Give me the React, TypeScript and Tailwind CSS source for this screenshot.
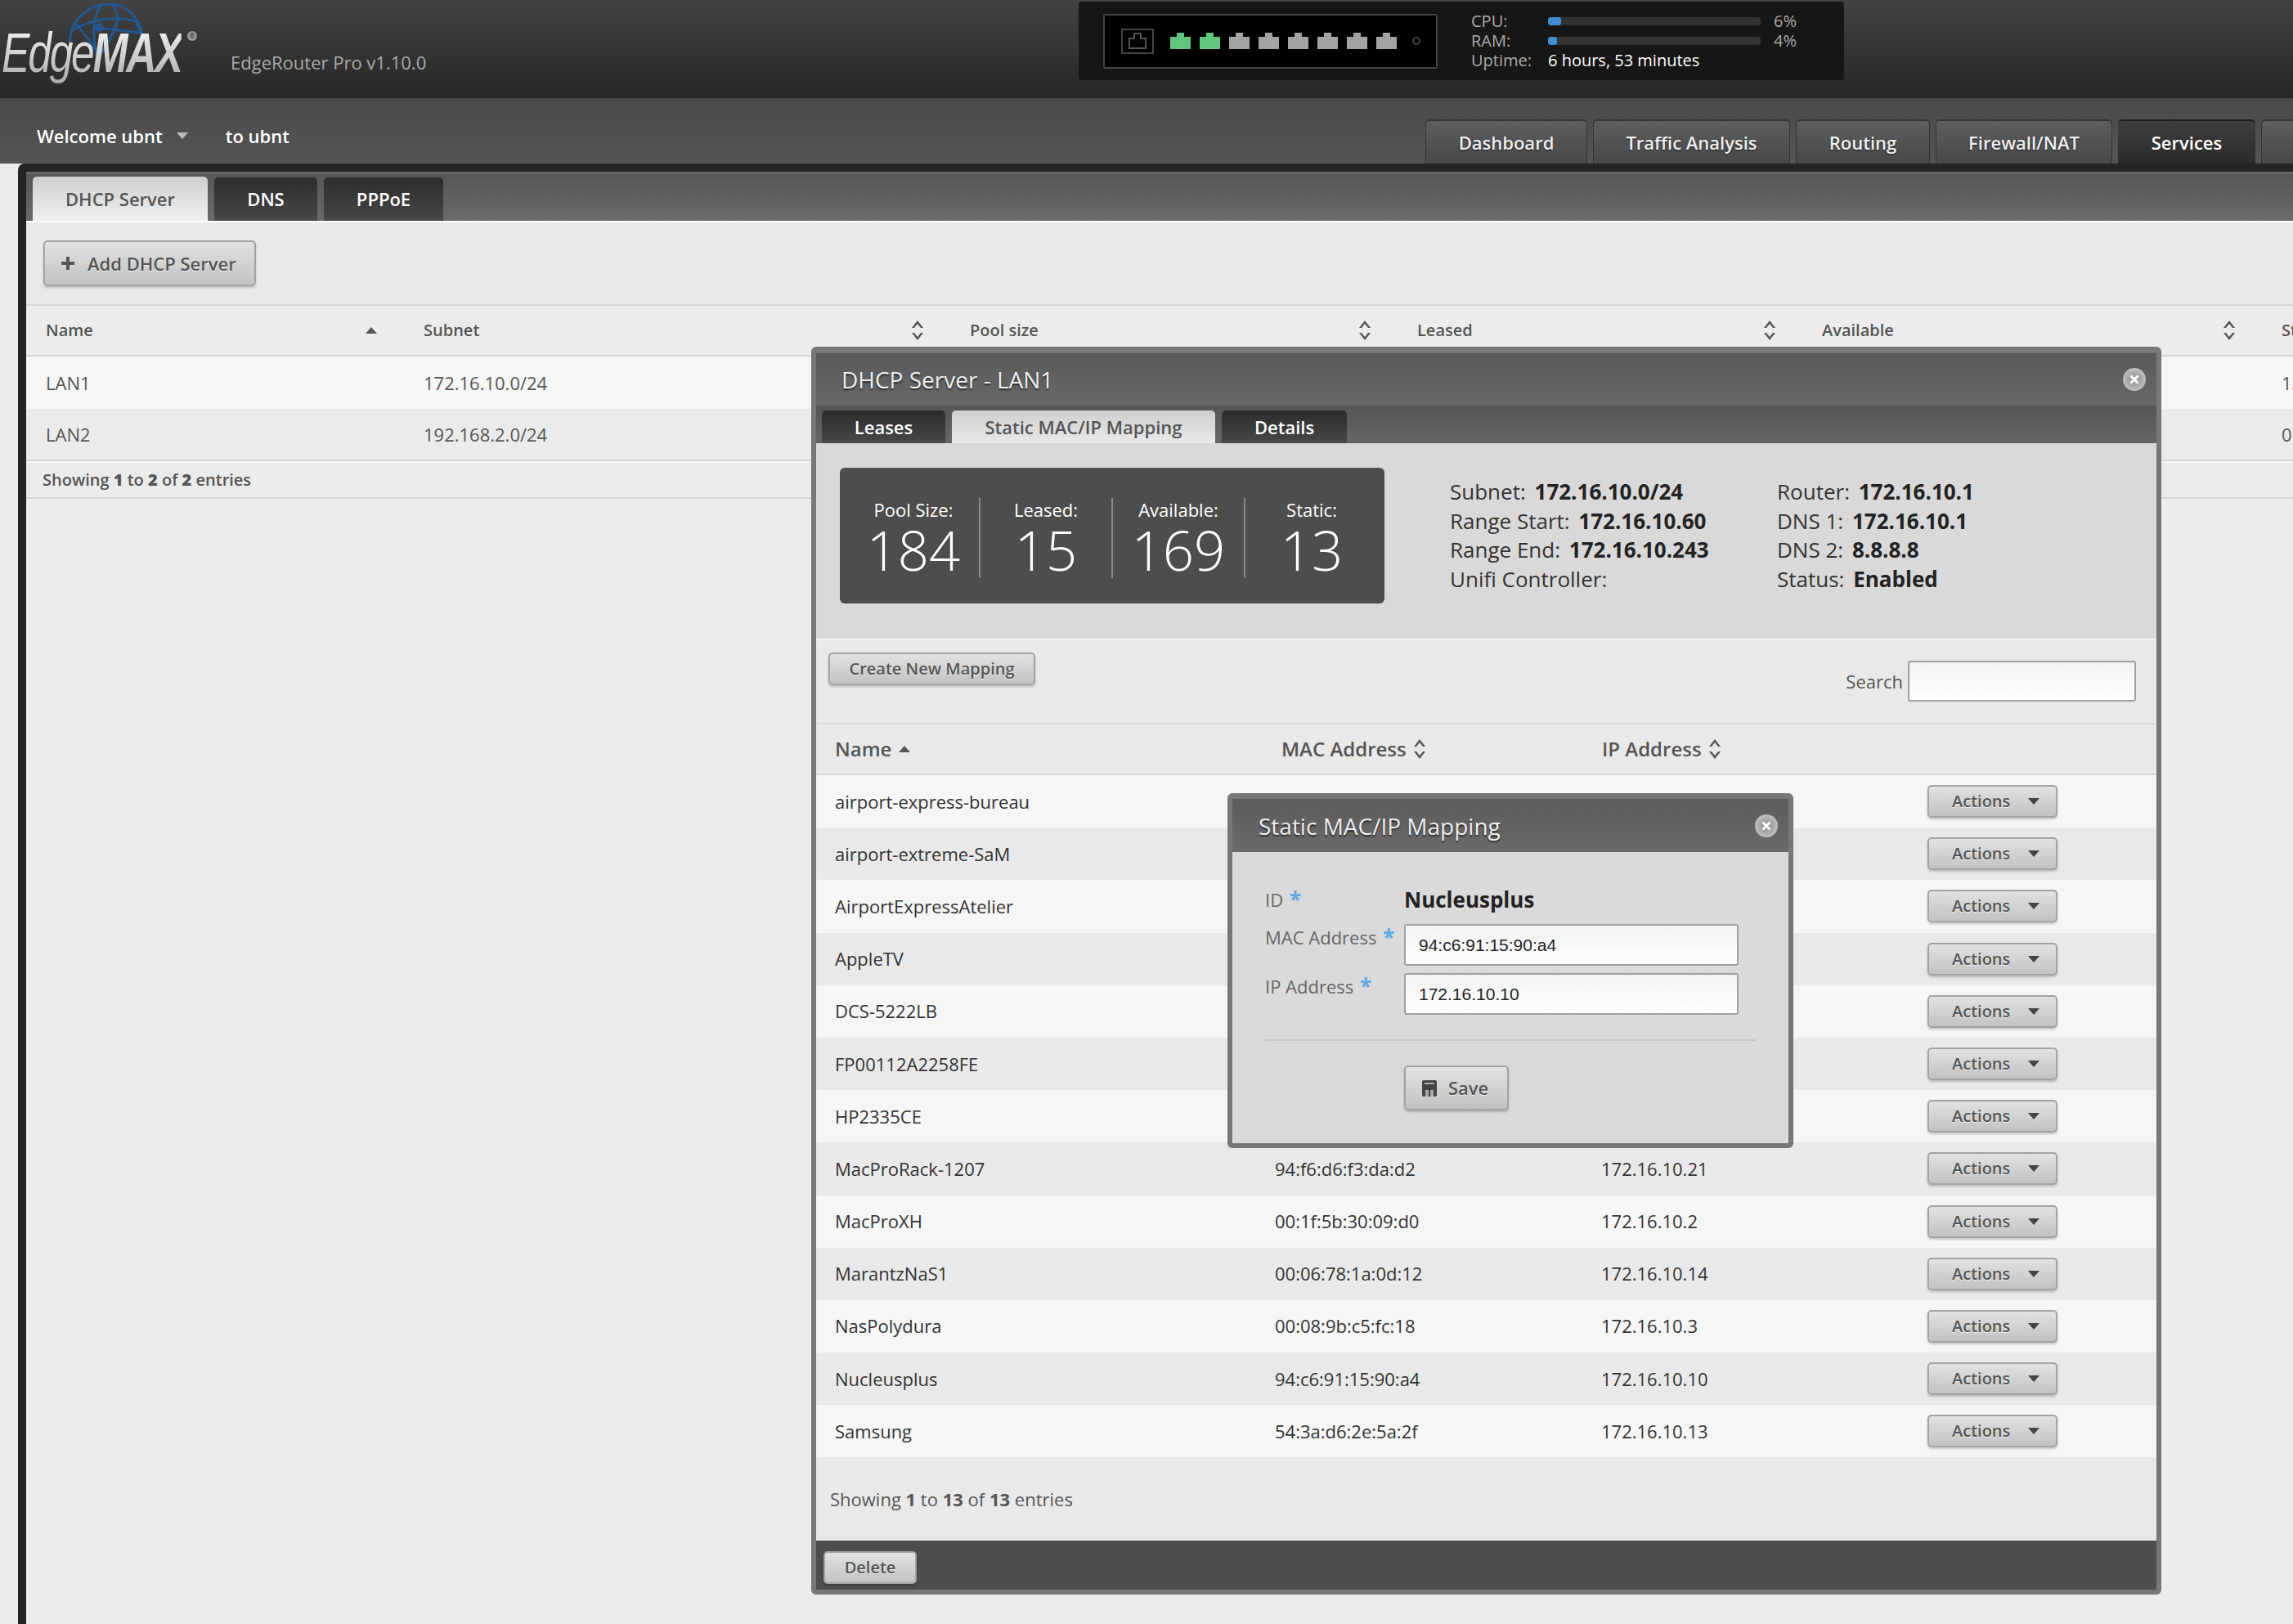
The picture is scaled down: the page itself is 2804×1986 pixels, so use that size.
import React from "react";

const btn =
  "rounded-[5px] border-2 border-[#a3a3a3] bg-linear-to-b from-[#e2e2e2] to-[#c2c2c2] shadow-[0_2px_3px_rgba(0,0,0,0.2)] text-[#555] font-semibold [text-shadow:0_1px_0_rgba(255,255,255,0.7)] flex items-center";

const star = "text-[#5fa8e0] font-bold text-[26px] leading-none ml-[2px]";
const arial = "[font-family:Liberation_Sans,Arial,sans-serif]";

const rows: [string, string, string][] = [
  ["airport-express-bureau", "9c:51:01:9c:1f:24", "172.16.10.26"],
  ["airport-extreme-SaM", "", ""],
  ["AirportExpressAtelier", "", ""],
  ["AppleTV", "", ""],
  ["DCS-5222LB", "", ""],
  ["FP00112A2258FE", "", ""],
  ["HP2335CE", "", ""],
  ["MacProRack-1207", "94:f6:d6:f3:da:d2", "172.16.10.21"],
  ["MacProXH", "00:1f:5b:30:09:d0", "172.16.10.2"],
  ["MarantzNaS1", "00:06:78:1a:0d:12", "172.16.10.14"],
  ["NasPolydura", "00:08:9b:c5:fc:18", "172.16.10.3"],
  ["Nucleusplus", "94:c6:91:15:90:a4", "172.16.10.10"],
  ["Samsung", "54:3a:d6:2e:5a:2f", "172.16.10.13"],
];

function Up({ className = "" }: { className?: string }) {
  return (
    <svg width="16" height="10" viewBox="0 0 16 10" className={className}>
      <path d="M8 1 L15 9 H1 Z" fill="#555" />
    </svg>
  );
}

function Both() {
  return (
    <svg width="16" height="26" viewBox="0 0 16 26" className="shrink-0">
      <path d="M8 1 L15 10 H12 L8 5 L4 10 H1 Z" fill="#555" />
      <path d="M8 25 L15 16 H12 L8 21 L4 16 H1 Z" fill="#555" />
    </svg>
  );
}

function Down() {
  return (
    <svg width="16" height="10" viewBox="0 0 16 10" className="shrink-0">
      <path d="M1 1 H15 L8 9 Z" fill="#444" />
    </svg>
  );
}

function Close() {
  return (
    <div className="w-[28px] h-[28px] rounded-full bg-[radial-gradient(circle,#8a8a8a,#d6d6d6)] flex items-center justify-center">
      <svg width="14" height="14" viewBox="0 0 14 14">
        <path d="M2.5 2.5 L11.5 11.5 M11.5 2.5 L2.5 11.5" stroke="#fff" strokeWidth="3" />
      </svg>
    </div>
  );
}

function Port({ on }: { on: boolean }) {
  const c = on ? "#5fc57f" : "#a3a3a3";
  return (
    <svg width="25" height="20" viewBox="0 0 25 20">
      <path d="M0 5 H8 V0 H17 V5 H25 V20 H0 Z" fill={c} />
    </svg>
  );
}

function Logo() {
  return (
    <div className="relative w-[260px] h-[120px] shrink-0">
      <svg width="110" height="76" viewBox="0 0 110 76" className="absolute left-[74px] top-0">
        <g fill="none" stroke="#23578f" strokeWidth="3">
          <path d="M12 52 C10 24 36 4 62 5 C82 6 98 24 100 44" />
          <path d="M16 36 C34 26 62 18 92 26 C96 34 98 42 100 48" />
          <path d="M50 6 C40 20 38 40 44 66" />
          <path d="M62 5 C74 18 74 28 48 68" />
          <path d="M18 28 C30 42 40 56 50 70" />
          <path d="M46 34 L96 40" />
        </g>
        <circle cx="47" cy="34" r="5" fill="#23578f" />
      </svg>
      <div className={`absolute left-[2px] top-[24px] origin-left scale-x-[0.76] whitespace-nowrap ${arial} italic text-[68px] leading-[80px] tracking-[-3px] text-transparent bg-clip-text bg-linear-to-b from-[#ffffff] to-[#a8a8a8]`}>
        Edge<span className="font-bold">MAX</span>
      </div>
      <div className="absolute left-[229px] top-[38px] w-[12px] h-[12px] rounded-full bg-[#9a9a9a] text-[9px] leading-[12px] text-center text-[#333]">®</div>
    </div>
  );
}

function StatusBox() {
  return (
    <div className="absolute left-[1319px] top-[2px] w-[936px] h-[96px] bg-[#161616] rounded-[4px] flex items-center pl-[30px]">
      <div className="w-[409px] h-[67px] bg-black border-2 border-[#444] rounded-[2px] flex items-center pl-[20px]">
        <div className="w-[40px] h-[31px] border-2 border-[#444] flex items-center justify-center mr-[20px]">
          <svg width="26" height="23" viewBox="0 0 26 23" fill="none">
            <path d="M3 8 H9 V2 H17 V8 H23 V20 H3 Z" stroke="#555" strokeWidth="2" />
          </svg>
        </div>
        <div className="flex gap-[11px]">
          {[true, true, false, false, false, false, false, false].map((on, i) => (
            <Port key={i} on={on} />
          ))}
        </div>
        <div className="ml-[19px] w-[10px] h-[10px] rounded-full border-2 border-[#444]" />
      </div>
      <div className="ml-[41px] text-[20px] leading-[24px] text-[#aaa] w-[440px]">
        {[["CPU:", "6%", "w-[16px]"], ["RAM:", "4%", "w-[11px]"]].map(([l, p, w]) => (
          <div key={l} className="flex items-center h-[24px]">
            <span className="w-[94px]">{l}</span>
            <div className="w-[260px] h-[10px] rounded-[3px] bg-[#333] overflow-hidden">
              <div className={`h-full bg-[#3f8fd0] rounded-[3px] ${w}`} />
            </div>
            <span className="ml-[16px]">{p}</span>
          </div>
        ))}
        <div className="flex items-center h-[24px]">
          <span className="w-[94px]">Uptime:</span>
          <span className="text-white">6 hours, 53 minutes</span>
        </div>
      </div>
    </div>
  );
}

const navs: [string, string][] = [
  ["Dashboard", "w-[198px]"],
  ["Traffic Analysis", "w-[241px]"],
  ["Routing", "w-[164px]"],
  ["Firewall/NAT", "w-[216px]"],
];

function StaticModal() {
  return (
    <div className="absolute left-[1501px] top-[970px] w-[692px] h-[434px] bg-[#777] rounded-[6px] pt-[7px] px-[6px] pb-[6px] flex flex-col z-20">
      <div className="h-[65px] shrink-0 bg-linear-to-b from-[#5c5c5c] to-[#6a6a6a] flex items-center justify-between pl-[32px] pr-[13px]">
        <span className="text-[28px] text-[#eee] [text-shadow:0_2px_2px_rgba(0,0,0,0.6)]">Static MAC/IP Mapping</span>
        <Close />
      </div>
      <div className="flex-1 bg-[#dadada] pl-[40px] pr-[40px]">
        <div className="flex items-center h-[88px] pt-[28px] box-border">
          <span className="w-[170px] text-[22px] text-[#666] flex items-center">ID&nbsp;<b className={star}>*</b></span>
          <span className="text-[26px] font-bold text-[#222]">Nucleusplus</span>
        </div>
        <div className="flex h-[60px]">
          <span className="w-[170px] h-[32px] text-[22px] text-[#666] whitespace-nowrap flex items-center">MAC Address&nbsp;<b className={star}>*</b></span>
          <div className={`w-[409px] h-[51px] border-2 border-[#a0a0a0] rounded-[3px] bg-linear-to-b from-[#f2f2f2] to-white flex items-center pl-[16px] text-[21px] text-[#222] ${arial}`}>94:c6:91:15:90:a4</div>
        </div>
        <div className="flex h-[51px]">
          <span className="w-[170px] h-[32px] text-[22px] text-[#666] whitespace-nowrap flex items-center">IP Address&nbsp;<b className={star}>*</b></span>
          <div className={`w-[409px] h-[51px] border-2 border-[#a0a0a0] rounded-[3px] bg-linear-to-b from-[#f2f2f2] to-white flex items-center pl-[16px] text-[21px] text-[#222] ${arial}`}>172.16.10.10</div>
        </div>
        <div className="h-[2px] bg-[#c8c8c8] mt-[30px]" />
        <div className="pl-[170px] mt-[30px]">
          <div className={`${btn} w-[128px] h-[55px] pl-[20px] gap-[14px] text-[22px]`}>
            <svg width="18" height="20" viewBox="0 0 18 20">
              <path d="M2 0 H16 Q18 0 18 2 V18 Q18 20 16 20 H2 Q0 20 0 18 V2 Q0 0 2 0 Z" fill="#444" />
              <rect x="3" y="3" width="12" height="2" fill="#aaa" />
              <rect x="4" y="12" width="4" height="8" fill="#aaa" />
              <rect x="10" y="12" width="4" height="8" fill="#aaa" />
            </svg>
            Save
          </div>
        </div>
      </div>
    </div>
  );
}

function ServerModal() {
  return (
    <div className="absolute left-[992px] top-[424px] w-[1651px] h-[1526px] bg-[#777] rounded-[6px] pt-[8px] px-[6px] pb-[6px] flex flex-col z-10">
      <div className="h-[64px] shrink-0 bg-linear-to-b from-[#5a5a5a] to-[#686868] flex items-center justify-between pl-[31px] pr-[13px]">
        <span className="text-[28px] text-[#eee] [text-shadow:0_2px_2px_rgba(0,0,0,0.6)]">DHCP Server - LAN1</span>
        <Close />
      </div>
      <div className="h-[46px] shrink-0 bg-linear-to-b from-[#555] to-[#666] flex items-end pl-[7px] gap-[8px]">
        <div className="w-[151px] h-[40px] rounded-t-[5px] bg-linear-to-b from-[#2c2c2c] to-[#484848] text-white font-semibold text-[22px] flex items-center justify-center">Leases</div>
        <div className="w-[322px] h-[40px] rounded-t-[5px] bg-linear-to-b from-[#cfcfcf] to-[#e9e9e9] text-[#555] font-semibold text-[22px] flex items-center justify-center">Static MAC/IP Mapping</div>
        <div className="w-[153px] h-[40px] rounded-t-[5px] bg-linear-to-b from-[#2c2c2c] to-[#484848] text-white font-semibold text-[22px] flex items-center justify-center">Details</div>
      </div>
      <div className="h-[241px] shrink-0 bg-[#d9d9d9] pt-[30px] pl-[29px] flex border-b-2 border-[#f4f4f4]">
        <div className="w-[666px] h-[166px] bg-[#4d4d4d] rounded-[6px] flex items-center pl-[10px] pt-[5px]">
          {[
            ["Pool Size:", "184"],
            ["Leased:", "15"],
            ["Available:", "169"],
            ["Static:", "13"],
          ].map(([l, n], i) => (
            <div key={l} className={`w-[162px] h-[98px] shrink-0 flex flex-col items-center justify-center text-white ${i < 3 ? "border-r-2 border-[#8a8a8a]" : ""}`}>
              <span className="text-[22px] leading-[28px] font-normal">{l}</span>
              <span className="text-[67px] leading-[70px] font-light">{n}</span>
            </div>
          ))}
        </div>
        <div className="ml-[80px] mt-[12px] text-[26px] leading-[35.5px] text-[#333] w-[400px]">
          <div>Subnet: <b className="ml-[4px] text-[#222]">172.16.10.0/24</b></div>
          <div>Range Start: <b className="ml-[4px] text-[#222]">172.16.10.60</b></div>
          <div>Range End: <b className="ml-[4px] text-[#222]">172.16.10.243</b></div>
          <div>Unifi Controller:</div>
        </div>
        <div className="mt-[12px] text-[26px] leading-[35.5px] text-[#333]">
          <div>Router: <b className="ml-[4px] text-[#222]">172.16.10.1</b></div>
          <div>DNS 1: <b className="ml-[4px] text-[#222]">172.16.10.1</b></div>
          <div>DNS 2: <b className="ml-[4px] text-[#222]">8.8.8.8</b></div>
          <div>Status: <b className="ml-[4px] text-[#222]">Enabled</b></div>
        </div>
      </div>
      <div className="h-[103px] shrink-0 bg-[#e9e9e9] border-b-2 border-[#d6d6d6] relative pl-[15px] pt-[15px]">
        <div className={`${btn} w-[253px] h-[40px] justify-center text-[20px]`}>Create New Mapping</div>
        <div className="absolute right-[25px] top-[25px] flex items-center gap-[6px]">
          <span className="text-[22px] text-[#555]">Search</span>
          <div className="w-[279px] h-[50px] border-2 border-[#a0a0a0] rounded-[3px] bg-linear-to-b from-[#f2f2f2] to-white" />
        </div>
      </div>
      <div className="h-[62px] shrink-0 bg-[#e9e9e9] border-b-2 border-[#d6d6d6] flex items-center text-[24px] font-semibold text-[#555]">
        <div className="w-[546px] pl-[23px] flex items-center gap-[8px]">Name <Up /></div>
        <div className="w-[413px] pl-[23px] flex items-center gap-[8px]">MAC Address <Both /></div>
        <div className="pl-[2px] flex items-center gap-[8px]">IP Address <Both /></div>
      </div>
      <div className="shrink-0">
        {rows.map(([name, mac, ip], i) => (
          <div key={name} className={`h-[64.2px] flex items-center text-[22px] text-[#333] ${i % 2 ? "bg-[#e9e9e9]" : "bg-[#f6f6f6]"}`}>
            <div className="w-[546px] pl-[23px]">{name}</div>
            <div className="w-[414px] pl-[15px]">{mac}</div>
            <div className="w-[399px]">{ip}</div>
            <div className={`${btn} w-[159px] h-[40px] pl-[28px] text-[20px] font-semibold gap-[21px]`}>
              Actions <Down />
            </div>
          </div>
        ))}
      </div>
      <div className="flex-1 bg-[#e9e9e9] flex items-center pl-[17px] text-[22px] text-[#555]">
        <span>Showing <b>1</b> to <b>13</b> of <b>13</b> entries</span>
      </div>
      <div className="h-[60px] shrink-0 bg-[#4d4d4d] flex items-center pl-[9px] pt-[5px]">
        <div className={`${btn} w-[114px] h-[40px] justify-center text-[20px]`}>Delete</div>
      </div>
    </div>
  );
}

export default function App() {
  const headers: [string, string, boolean][] = [
    ["Name", "w-[462px]", true],
    ["Subnet", "w-[668px]", false],
    ["Pool size", "w-[547px]", false],
    ["Leased", "w-[495px]", false],
    ["Available", "w-[562px]", false],
  ];
  return (
    <div className="relative w-[2804px] h-[1986px] overflow-hidden bg-[#ececec] [font-family:Open_Sans,sans-serif]">
      <div className="relative h-[120px] bg-linear-to-b from-[#424242] to-[#272727] flex">
        <Logo />
        <div className="text-[22px] text-[#aaa] ml-[22px] mt-[60px] h-[32px]">EdgeRouter Pro v1.10.0</div>
        <StatusBox />
      </div>
      <div className="h-[80px] bg-linear-to-b from-[#4a4a4a] to-[#555] relative">
        <div className="flex items-center h-[64px] pl-[45px] pt-[22px] box-content text-[22px] font-semibold text-white gap-[16px] absolute top-0 left-0 -mt-[8px]">
          <span>Welcome ubnt</span>
          <svg width="16" height="10" viewBox="0 0 16 10"><path d="M1 1 H15 L8 9 Z" fill="#bbb" /></svg>
          <span className="ml-[29px]">to ubnt</span>
        </div>
        <div className="flex gap-[7px] absolute left-[1743px] bottom-0 whitespace-nowrap">
          {navs.map(([n, w]) => (
            <div key={n} className={`${w} h-[54px] border-t-2 border-x border-[#333] rounded-t-[5px] bg-linear-to-b from-[#5e5e5e] to-[#484848] text-[#eee] text-[22px] font-semibold flex items-center justify-center [text-shadow:0_1px_2px_rgba(0,0,0,0.6)]`}>{n}</div>
          ))}
          <div className="w-[168px] h-[54px] border-t-2 border-[#1c1c1c] rounded-t-[5px] bg-linear-to-b from-[#3f3f3f] to-[#2a2a2a] text-white text-[22px] font-semibold flex items-center justify-center">Services</div>
          <div className="w-[60px] h-[54px] border-t-2 border-x border-[#333] rounded-t-[5px] bg-linear-to-b from-[#5e5e5e] to-[#484848]" />
        </div>
      </div>
      <div className="ml-[22px] h-[1786px] bg-[#242424] pt-[10px] pl-[10px] rounded-tl-[8px]">
        <div className="h-full bg-[#ececec]">
          <div className="h-[60px] border-t-2 border-[#6a6a6a] bg-linear-to-b from-[#565656] to-[#6a6a6a] flex items-end pl-[8px] gap-[8px] box-border">
            <div className="w-[214px] h-[54px] rounded-t-[5px] bg-linear-to-b from-[#cfcfcf] to-[#f0f0f0] text-[#555] font-semibold text-[22px] flex items-center justify-center">DHCP Server</div>
            <div className="w-[126px] h-[53px] rounded-t-[5px] bg-linear-to-b from-[#2c2c2c] to-[#484848] text-white font-semibold text-[22px] flex items-center justify-center">DNS</div>
            <div className="w-[146px] h-[53px] rounded-t-[5px] bg-linear-to-b from-[#2c2c2c] to-[#484848] text-white font-semibold text-[22px] flex items-center justify-center">PPPoE</div>
          </div>
          <div className="h-[104px] bg-[#e9e9e9] border-t-2 border-[#fbfbfb] border-b-2 border-b-[#d4d4d4] pl-[21px] pt-[22px] box-border">
            <div className={`${btn} w-[260px] h-[56px] pl-[19px] gap-[15px] text-[22px]`}>
              <svg width="18" height="18" viewBox="0 0 18 18"><path d="M7 1 H11 V7 H17 V11 H11 V17 H7 V11 H1 V7 H7 Z" fill="#555" /></svg>
              Add DHCP Server
            </div>
          </div>
          <div className="h-[62px] bg-[#ececec] border-b-2 border-[#d4d4d4] flex items-center text-[20px] font-semibold text-[#555]">
            {headers.map(([h, w, isName]) => (
              <div key={h} className={`${w} pl-[24px] pr-[32px] flex items-center justify-between shrink-0`}>
                {h}
                {isName ? <Up /> : <Both />}
              </div>
            ))}
            <div className="pl-[24px]">Status</div>
          </div>
          <div className="h-[64px] bg-[#f6f6f6] flex items-center text-[22px] text-[#555]">
            <div className="w-[462px] pl-[24px] shrink-0">LAN1</div>
            <div className="w-[2272px] pl-[24px] shrink-0">172.16.10.0/24</div>
            <div className="pl-[24px]">13</div>
          </div>
          <div className="h-[64px] bg-[#ebebeb] border-b-2 border-[#d4d4d4] flex items-center text-[22px] text-[#555]">
            <div className="w-[462px] pl-[24px] shrink-0">LAN2</div>
            <div className="w-[2272px] pl-[24px] shrink-0">192.168.2.0/24</div>
            <div className="pl-[24px]">0</div>
          </div>
          <div className="h-[42px] bg-[#ebebeb] border-t-2 border-[#f6f6f6] border-b-2 border-b-[#d4d4d4] flex items-center pl-[20px] text-[20px] text-[#555] font-semibold box-content">
            <span>Showing <b>1</b> to <b>2</b> of <b>2</b> entries</span>
          </div>
        </div>
      </div>
      <ServerModal />
      <StaticModal />
    </div>
  );
}
